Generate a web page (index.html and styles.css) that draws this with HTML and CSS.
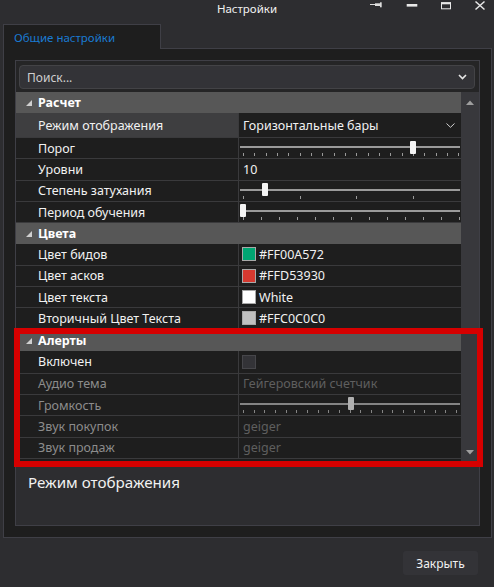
FILE: index.html
```html
<!DOCTYPE html>
<html lang="ru">
<head>
<meta charset="utf-8">
<title>Настройки</title>
<link rel="stylesheet" href="styles.css">
</head>
<body>
<div class="window">
  <div class="titlebar">
    <div></div>
    <div class="title">Настройки</div>
    <svg class="controls" width="126" height="12" viewBox="0 0 126 12">
      <rect x="2" y="4" width="5" height="1" fill="#dcdcdc"/>
      <rect x="7" y="3.3" width="5" height="2.7" fill="#dcdcdc"/>
      <rect x="12" y="2.3" width="1.7" height="5" fill="#dcdcdc"/>
      <rect x="38.7" y="4" width="10.6" height="2.6" fill="#e8e8e8"/>
      <rect x="73.5" y="2.8" width="9" height="6" fill="none" stroke="#e8e8e8" stroke-width="1"/>
      <rect x="73" y="2.3" width="10" height="2" fill="#e8e8e8"/>
      <path d="M107.5 1.5 L116.5 9.5 M116.5 1.5 L107.5 9.5" stroke="#e8e8e8" stroke-width="1.5" fill="none"/>
    </svg>
  </div>
  <div class="tabs"><div class="tab">Общие настройки</div></div>
  <div class="tabpanel">
    <div class="pg">
      <div class="search">
        <span>Поиск...</span>
        <svg width="9" height="6" viewBox="0 0 9 6"><path d="M1 1 L4.5 4.5 L8 1" stroke="#e6e6e6" stroke-width="1.6" fill="none"/></svg>
      </div>
      <div class="gridwrap">
        <div class="rows">
          <div class="cat"><svg class="tri" width="6" height="6" viewBox="0 0 6 6"><polygon points="6,0 6,6 0,6" fill="#d0d0d0"/></svg><span>Расчет</span></div>
          <div class="row tall sel">
            <div class="name">Режим отображения</div>
            <div class="val combo"><span>Горизонтальные бары</span><svg width="9" height="5" viewBox="0 0 9 5"><path d="M0.5 0.5 L4.5 4.3 L8.5 0.5" stroke="#cfcfcf" stroke-width="1" fill="none"/></svg></div>
          </div>
          <div class="row">
            <div class="name">Порог</div>
            <div class="val"><div class="slider">
              <div class="track"></div>
              <div class="ticks t20"><i></i><i></i><i></i><i></i><i></i><i></i><i></i><i></i><i></i><i></i><i></i><i></i><i></i><i></i><i></i><i></i><i></i><i></i><i></i><i></i></div>
              <div class="thumb" style="left:171px"></div>
            </div></div>
          </div>
          <div class="row">
            <div class="name">Уровни</div>
            <div class="val">10</div>
          </div>
          <div class="row">
            <div class="name">Степень затухания</div>
            <div class="val"><div class="slider">
              <div class="track"></div>
              <div class="ticks t4"><i></i><i></i><i></i><i></i></div>
              <div class="thumb" style="left:23px"></div>
            </div></div>
          </div>
          <div class="row">
            <div class="name">Период обучения</div>
            <div class="val"><div class="slider">
              <div class="track"></div>
              <div class="ticks t13"><i></i><i></i><i></i><i></i><i></i><i></i><i></i><i></i><i></i><i></i><i></i><i></i><i></i></div>
              <div class="thumb" style="left:1px"></div>
            </div></div>
          </div>
          <div class="cat"><svg class="tri" width="6" height="6" viewBox="0 0 6 6"><polygon points="6,0 6,6 0,6" fill="#d0d0d0"/></svg><span>Цвета</span></div>
          <div class="row">
            <div class="name">Цвет бидов</div>
            <div class="val"><span class="swatch green"></span>#FF00A572</div>
          </div>
          <div class="row">
            <div class="name">Цвет асков</div>
            <div class="val"><span class="swatch red"></span>#FFD53930</div>
          </div>
          <div class="row">
            <div class="name">Цвет текста</div>
            <div class="val"><span class="swatch white"></span>White</div>
          </div>
          <div class="row">
            <div class="name">Вторичный Цвет Текста</div>
            <div class="val"><span class="swatch silver"></span>#FFC0C0C0</div>
          </div>
          <div class="cat"><svg class="tri" width="6" height="6" viewBox="0 0 6 6"><polygon points="6,0 6,6 0,6" fill="#d0d0d0"/></svg><span>Алерты</span></div>
          <div class="row check">
            <div class="name">Включен</div>
            <div class="val"><span class="checkbox"></span></div>
          </div>
          <div class="row off">
            <div class="name">Аудио тема</div>
            <div class="val">Гейгеровский счетчик</div>
          </div>
          <div class="row off">
            <div class="name">Громкость</div>
            <div class="val"><div class="slider dim">
              <div class="track"></div>
              <div class="ticks t21"><i></i><i></i><i></i><i></i><i></i><i></i><i></i><i></i><i></i><i></i><i></i><i></i><i></i><i></i><i></i><i></i><i></i><i></i><i></i><i></i><i></i></div>
              <div class="thumb" style="left:108.5px"></div>
            </div></div>
          </div>
          <div class="row off">
            <div class="name">Звук покупок</div>
            <div class="val">geiger</div>
          </div>
          <div class="row off">
            <div class="name">Звук продаж</div>
            <div class="val">geiger</div>
          </div>
        </div>
        <div class="scrollbar">
          <svg width="8" height="5" viewBox="0 0 8 5"><polygon points="0,5 4,0.5 8,5" fill="#9e9e9e"/></svg>
          <svg width="8" height="5" viewBox="0 0 8 5"><polygon points="0,0 8,0 4,4.5" fill="#9e9e9e"/></svg>
        </div>
      </div>
      <div class="desc">Режим отображения</div>
    </div>
  </div>
  <div class="footer"><button class="btn">Закрыть</button></div>
</div>
<div class="highlight"></div>
</body>
</html>
```

FILE: styles.css
```css
* { box-sizing: border-box; margin: 0; padding: 0; }
html, body { width: 494px; height: 587px; overflow: hidden; }
body {
  background: #2d2d30;
  font-family: "Noto Sans", "Open Sans", sans-serif;
  color: #f1f1f1;
  position: relative;
}
.window { display: flex; flex-direction: column; height: 587px; }

.titlebar {
  height: 20px;
  display: grid;
  grid-template-columns: 1fr auto 1fr;
  align-items: start;
}
.title { font-size: 11.5px; line-height: 18px; color: #f1f1f1; }
.controls { justify-self: end; display: block; }

.tabs { margin-top: 4px; padding-left: 3px; display: flex; }
.tab {
  position: relative;
  z-index: 1;
  width: 158px;
  height: 25px;
  margin-bottom: -1px;
  border: 1px solid #3f3f46;
  border-bottom: none;
  background: #1e1e1e;
  color: #1a7bd2;
  font-size: 11.5px;
  line-height: 26px;
  padding-left: 10px;
}

.tabpanel {
  margin-left: 3px;
  width: 489px;
  height: 490px;
  background: #1e1e1e;
  border: 1px solid #3f3f46;
  padding: 11px;
}
.pg {
  height: 466px;
  border: 1px solid #3f3f46;
  background: #252526;
  display: flex;
  flex-direction: column;
}
.search {
  margin: 4px 4px 3px 3px;
  height: 24px;
  border: 1px solid #434346;
  border-radius: 4px;
  background: #333337;
  display: flex;
  align-items: center;
  justify-content: space-between;
  padding: 0 7px 0 7px;
  font-size: 12px;
  color: #cfcfcf;
}
.gridwrap { display: flex; height: 369px; }
.rows { width: 445px; background: #1e1e1e; display: flex; flex-direction: column; }
.scrollbar {
  flex: 1;
  background: #38383c;
  display: flex;
  flex-direction: column;
  align-items: center;
  justify-content: space-between;
  padding: 8px 0 6px;
}

.cat {
  height: 21px;
  background: #575757;
  display: flex;
  align-items: center;
  padding-left: 10px;
  font-size: 12.5px;
  font-weight: bold;
  color: #ffffff;
}
.cat .tri { margin-right: 6px; margin-top: 1px; }
.row {
  height: 21.33px;
  display: grid;
  grid-template-columns: 223px 1fr;
  border-bottom: 1px solid #3a3a3c;
  font-size: 12.5px;
}
.row.tall { height: 25px; }
.row.check { height: 23px; }
.name {
  border-right: 1px solid #3a3a3c;
  padding-left: 22px;
  display: flex;
  align-items: center;
  color: #f1f1f1;
  white-space: nowrap;
}
.row.sel .name { background: #3e3e40; }
.val {
  display: flex;
  align-items: center;
  padding-left: 4px;
  color: #f1f1f1;
  white-space: nowrap;
  min-width: 0;
}
.val.combo { justify-content: space-between; padding-right: 6px; }
.row.off .name { color: #8c8c8c; }
.row.off .val { color: #5f5f5f; }

.swatch {
  width: 14px;
  height: 14px;
  border: 1px solid #a8a8a8;
  margin: 0 3px 0 -1px;
}
.swatch.green { background: #00a572; }
.swatch.red { background: #d53930; }
.swatch.white { background: #ffffff; }
.swatch.silver { background: #c0c0c0; }
.checkbox {
  width: 14px;
  height: 14px;
  margin-left: -1px;
  background: #333337;
  border: 1px solid #46464a;
}

.val:has(.slider) { padding-left: 0; align-items: stretch; }
.slider { position: relative; width: 100%; padding: 8px 1px 0; }
.track { height: 2px; background: #9a9a9a; }
.ticks { display: flex; margin: 5px 0 0 3px; }
.ticks i { width: 1px; height: 3px; background: #9a9a9a; flex: none; }
.t20 { gap: 10.33px; }
.t4 { gap: 55.5px; }
.t13 { gap: 17px; }
.t21 { gap: 9.67px; }
.thumb {
  position: absolute;
  top: 2.5px;
  width: 6px;
  height: 13px;
  background: #f4f4f4;
  border-radius: 1px;
}
.slider.dim .track, .slider.dim .ticks i { background: #858585; }
.slider.dim .thumb { background: #b0b0b0; }

.desc {
  flex: 1;
  margin-top: 1px;
  border-top: 1px solid #3f3f46;
  background: #2d2d30;
  padding: 9px 0 0 12px;
  font-size: 15.2px;
  line-height: 20px;
  color: #f1f1f1;
}

.footer { flex: 1; display: flex; justify-content: flex-end; align-items: flex-start; }
.btn {
  margin: 13px 16px 0 0;
  width: 75px;
  height: 24px;
  border: none;
  border-radius: 3px;
  background: #333337;
  color: #f1f1f1;
  font-family: "Noto Sans", "Open Sans", sans-serif;
  font-size: 12px;
}

.highlight {
  position: absolute;
  left: 14px;
  top: 328px;
  width: 469px;
  height: 139px;
  border: 6px solid #d60000;
  pointer-events: none;
}
```
